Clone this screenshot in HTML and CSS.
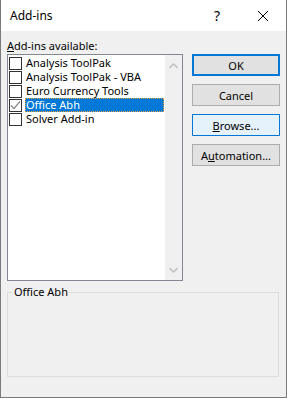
FILE: index.html
```html
<!DOCTYPE html>
<html>
  <head>
    <link rel="stylesheet" href="styles.css">
  </head>
  <body>
    <div class="dialog">
      <div class="titlebar">
        <span class="title">Add-ins</span>
        <span class="tbtn help">?</span>
        <span class="tbtn close">
          <svg width="10" height="10" viewBox="0 0 10 10">
            <path d="M0 0 L10 10 M10 0 L0 10" stroke="#000" stroke-width="1" fill="none"/>
          </svg>
        </span>
      </div>

      <div class="content">
        <div class="label"><u>A</u>dd-ins available:</div>

        <div class="main">
          <div class="listbox">
            <div class="items">
              <div class="item">
                <span class="check"></span>
                <span class="name">Analysis ToolPak</span>
              </div>
              <div class="item">
                <span class="check"></span>
                <span class="name">Analysis ToolPak - VBA</span>
              </div>
              <div class="item">
                <span class="check"></span>
                <span class="name">Euro Currency Tools</span>
              </div>
              <div class="item selected">
                <span class="check">
                  <svg width="11" height="11" viewBox="0 0 11 11">
                    <path d="M1 5.5 L4 8.5 L10 1.5" stroke="#8a8a8a" stroke-width="1.2" fill="none"/>
                  </svg>
                </span>
                <span class="name">Office Abh</span>
              </div>
              <div class="item">
                <span class="check"></span>
                <span class="name">Solver Add-in</span>
              </div>
            </div>
            <div class="scrollbar">
              <svg width="9" height="6" viewBox="0 0 9 6">
                <path d="M0.5 5 L4.5 1 L8.5 5" stroke="#c2c2c2" stroke-width="1.6" fill="none"/>
              </svg>
              <svg width="9" height="6" viewBox="0 0 9 6">
                <path d="M0.5 1 L4.5 5 L8.5 1" stroke="#c2c2c2" stroke-width="1.6" fill="none"/>
              </svg>
            </div>
          </div>

          <div class="buttons">
            <button class="default">OK</button>
            <button>Cancel</button>
            <button class="hover"><u>B</u>rowse...</button>
            <button>A<u>u</u>tomation...</button>
          </div>
        </div>

        <fieldset class="group">
          <legend>Office Abh</legend>
        </fieldset>
      </div>
    </div>
  </body>
</html>
```

FILE: styles.css
```css
body {
  margin: 0;
  font-family: "Noto Sans", "Open Sans", sans-serif;
  font-size: 11px;
  color: #000;
}
.dialog {
  width: 287px;
  height: 398px;
  box-sizing: border-box;
  background: #f0f0f0;
  border: 1px solid #7a7a7a;
  border-top: none;
}
.titlebar {
  display: flex;
  align-items: center;
  height: 31px;
  background: white;
}
.title {
  flex: 1;
  padding-left: 9px;
  font-size: 12px;
}
.tbtn {
  width: 46px;
  height: 31px;
  display: flex;
  align-items: center;
  justify-content: center;
}
.help {
  font-size: 14px;
}
.content {
  padding: 7px 6px 0 6px;
}
.label {
  height: 16px;
  line-height: 16px;
}
.main {
  display: flex;
  gap: 9px;
}
.listbox {
  width: 176px;
  height: 227px;
  box-sizing: border-box;
  border: 1px solid #828790;
  background: white;
  display: flex;
}
.items {
  flex: 1;
  padding-top: 1px;
}
.item {
  display: flex;
  align-items: center;
  height: 14px;
}
.check {
  width: 13px;
  height: 13px;
  box-sizing: border-box;
  border: 1px solid #333;
  background: white;
  margin: 0 3px 0 1px;
  display: flex;
  align-items: center;
  justify-content: center;
}
.name {
  flex: 1;
  height: 14px;
  line-height: 14px;
  padding-left: 1px;
  margin-right: 1px;
  white-space: nowrap;
}
.item.selected .name {
  background: #0078d7;
  color: white;
  outline: 1px dotted #f0a030;
  outline-offset: -1px;
}
.scrollbar {
  width: 17px;
  background: #f0f0f0;
  display: flex;
  flex-direction: column;
  justify-content: space-between;
  align-items: center;
  padding: 8px 0 7px;
}
.buttons {
  display: flex;
  flex-direction: column;
  gap: 8px;
}
button {
  width: 88px;
  height: 22px;
  background: #e1e1e1;
  border: 1px solid #adadad;
  font-family: inherit;
  font-size: 11px;
  color: #000;
  padding: 0;
}
button.default {
  border: 2px solid #0078d7;
}
button.hover {
  background: #e5f1fb;
  border-color: #0078d7;
}
.group {
  margin: 4px 1px 0 0;
  padding: 0;
  height: 90px;
  border: 1px solid #dcdcdc;
}
.group legend {
  padding: 0 1px;
  margin-left: 5px;
  line-height: 14px;
}
```
